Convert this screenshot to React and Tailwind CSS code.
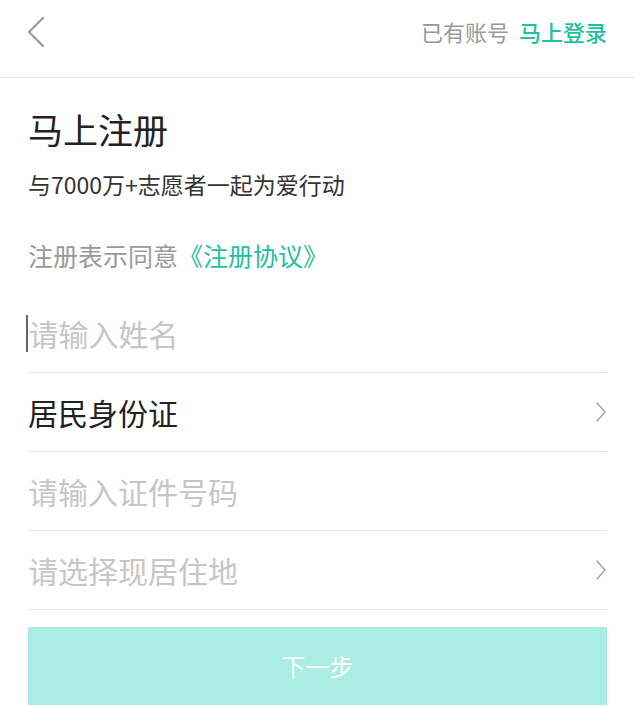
import React from "react";

const font = { fontFamily: '"Noto Sans CJK SC", "Noto Sans", sans-serif' };

function ChevronRight() {
  return (
    <svg width="12" height="22" viewBox="0 0 12 22" fill="none">
      <path d="M2 2 L10 11 L2 20" stroke="#a8a8a8" strokeWidth="1.6" strokeLinecap="round" strokeLinejoin="round" />
    </svg>
  );
}

function Row({ children, chevron, cursor }) {
  return (
    <div className="h-[79px] border-b border-[#e6e6e6] flex items-center justify-between">
      <div className="flex items-center">
        {cursor && <span className="w-[1.5px] h-[37px] bg-[#666] -ml-[2px] mr-[1px]" />}
        {children}
      </div>
      {chevron && <ChevronRight />}
    </div>
  );
}

export default function App() {
  return (
    <div className="w-[635px] h-[706px] bg-white overflow-hidden" style={font}>
      <div className="h-[78px] border-b border-[#e6e6e6] flex items-center justify-between pl-[26px] pr-[28px]">
        <svg width="20" height="32" viewBox="0 0 20 32" fill="none" className="-mt-[13px]">
          <path d="M17 2 L3 16 L17 30" stroke="#9a9a9a" strokeWidth="2.2" strokeLinecap="round" strokeLinejoin="round" />
        </svg>
        <div className="flex items-center text-[22px] leading-none -mt-[16px]">
          <span className="text-[#999999]">已有账号</span>
          <span className="text-[#1fbfa3] font-medium ml-[10px]">马上登录</span>
        </div>
      </div>
      <div className="px-[28px]">
        <div className="mt-[31px] text-[35px] leading-[40px] text-[#222]">马上注册</div>
        <div className="mt-[20px] text-[23px] leading-[30px] text-[#333]">与7000万+志愿者一起为爱行动</div>
        <div className="mt-[41px] text-[25px] leading-[30px] text-[#999999]">
          注册表示同意<span className="text-[#1fbfa3]">《注册协议》</span>
        </div>
        <div className="mt-[24px]">
          <Row cursor>
            <span className="text-[30px] text-[#c6c6c6]">请输入姓名</span>
          </Row>
          <Row chevron>
            <span className="text-[30px] text-[#222]">居民身份证</span>
          </Row>
          <Row>
            <span className="text-[30px] text-[#c6c6c6]">请输入证件号码</span>
          </Row>
          <Row chevron>
            <span className="text-[30px] text-[#c6c6c6]">请选择现居住地</span>
          </Row>
        </div>
        <div className="mt-[17px] h-[78px] bg-[#aaeee3] flex items-center justify-center text-[24px] text-white">
          下一步
        </div>
      </div>
    </div>
  );
}
